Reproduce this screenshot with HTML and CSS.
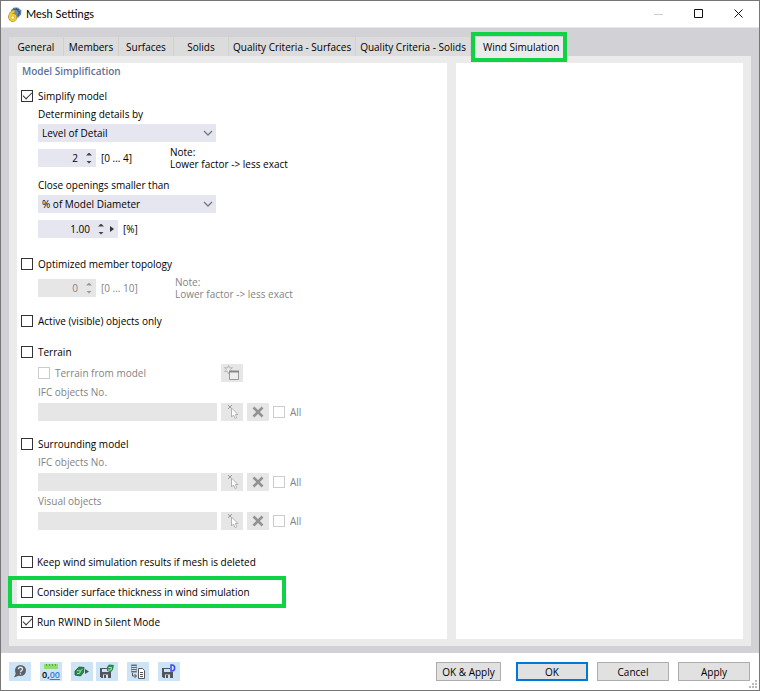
FILE: index.html
```html
<!DOCTYPE html>
<html lang="en">
  <head>
    <meta charset="UTF-8" />
    <title>Mesh Settings</title>
    <link rel="stylesheet" href="styles.css">
  </head>

  <body>
    <!-- shared icons -->
    <svg class="defs">
      <symbol id="i-chevron" viewBox="0 0 10 6">
        <path d="M1 1l4 4 4-4" fill="none" stroke="#77777c" stroke-width="1.3" />
      </symbol>
      <symbol id="i-pick" viewBox="0 0 22 18">
        <path d="M7 2l4 4M11 2l-4 4" stroke="#999" fill="none" />
        <path d="M10.500 5v9l2-2 1.500 3.500 1.800-.8-1.500-3.200h2.700z" fill="#fff" stroke="#aaa" stroke-width=".9" />
      </symbol>
      <symbol id="i-clear" viewBox="0 0 22 18">
        <path d="M6.500 4.500l9 9M15.500 4.500l-9 9" stroke="#929292" stroke-width="2.600" fill="none" />
      </symbol>
    </svg>

    <div class="window">
      <header class="titlebar">
        <svg class="logo" width="14" height="15" viewBox="0 0 14 15">
          <path d="M3 3l3-2.500 4 0 3.500 3-.5 4-3 3.500-3-2-3-2z" fill="#6c89b3" />
          <path d="M5 2l6 1M8 1l4 6M10 9l2-5" stroke="#34527c" fill="none" />
          <path d="M6.500 4C3.500 5 1.800 7.500 1.800 10.500" stroke="#a08a3a" stroke-width="3" fill="none" />
          <circle cx="4.700" cy="10.500" r="3" fill="#fff3b0" stroke="#a08a3a" stroke-width="2.800" />
          <path d="M6.500 4.200C3.500 5 1.800 7.500 1.800 10.500" stroke="#f1ce2f" stroke-width="2" fill="none" />
          <circle cx="4.700" cy="10.500" r="2.800" fill="none" stroke="#f1ce2f" stroke-width="1.900" />
        </svg>
        <h1>Mesh Settings</h1>
        <button class="win-btn" aria-label="Minimize" disabled>
          <svg width="10" height="10"><path d="M0 5.500h9" stroke="#ccc" /></svg>
        </button>
        <button class="win-btn" aria-label="Maximize">
          <svg width="10" height="10"><path d="M.5.5h8v8h-8z" fill="none" stroke="#111" /></svg>
        </button>
        <button class="win-btn" aria-label="Close">
          <svg width="10" height="10"><path d="M.5.5l8 8M8.500.5l-8 8" stroke="#111" /></svg>
        </button>
      </header>

      <main class="content">
        <div class="tabs" role="tablist">
          <button class="tab" role="tab">General</button>
          <button class="tab" role="tab">Members</button>
          <button class="tab" role="tab">Surfaces</button>
          <button class="tab" role="tab">Solids</button>
          <button class="tab" role="tab">Quality Criteria - Surfaces</button>
          <button class="tab" role="tab">Quality Criteria - Solids</button>
          <button class="tab active marked" role="tab" aria-selected="true">Wind Simulation</button>
        </div>

        <div class="page">
          <section class="panel options">
            <h2>Model Simplification</h2>

            <div class="group first">
              <label class="check"><input type="checkbox" checked>Simplify model</label>
              <div class="sub">
                <label class="caption" for="details">Determining details by</label>
                <div class="select">
                  <select id="details"><option>Level of Detail</option></select>
                  <svg width="10" height="6"><use href="#i-chevron" /></svg>
                </div>
                <div class="line">
                  <div class="spin">
                    <input type="text" value="2" aria-label="Level of detail">
                    <span class="arrows"><button class="up" aria-label="Increase"></button><button class="down" aria-label="Decrease"></button></span>
                  </div>
                  <span class="range">[0 ... 4]</span>
                  <p class="note">Note:<br>Lower factor -&gt; less exact</p>
                </div>
                <label class="caption spaced" for="openings">Close openings smaller than</label>
                <div class="select">
                  <select id="openings"><option>% of Model Diameter</option></select>
                  <svg width="10" height="6"><use href="#i-chevron" /></svg>
                </div>
                <div class="line">
                  <div class="spin wide">
                    <input type="text" value="1.00" aria-label="Opening size">
                    <span class="arrows"><button class="up" aria-label="Increase"></button><button class="down" aria-label="Decrease"></button></span>
                    <button class="more" aria-label="More"></button>
                  </div>
                  <span class="range">[%]</span>
                </div>
              </div>
            </div>

            <div class="group far">
              <label class="check"><input type="checkbox">Optimized member topology</label>
              <div class="sub disabled">
                <div class="line">
                  <div class="spin">
                    <input type="text" value="0" aria-label="Topology factor" disabled>
                    <span class="arrows"><button class="up" aria-label="Increase" disabled></button><button class="down" aria-label="Decrease" disabled></button></span>
                  </div>
                  <span class="range">[0 ... 10]</span>
                  <p class="note">Note:<br>Lower factor -&gt; less exact</p>
                </div>
              </div>
            </div>

            <div class="group">
              <label class="check"><input type="checkbox">Active (visible) objects only</label>
            </div>

            <div class="group tight">
              <label class="check"><input type="checkbox">Terrain</label>
              <div class="sub disabled">
                <div class="pick">
                  <label class="check"><input type="checkbox" disabled>Terrain from model</label>
                  <button class="tool" aria-label="New terrain" disabled>
                    <svg width="22" height="18" viewBox="0 0 22 18">
                      <path d="M7.500 1.500l1 2.600 3-.5-2 2 2 2-3-.3-1 2.700-1-2.700-3 .3 2-2-2-2 3 .5z" fill="#eee" stroke="#aaa" stroke-width=".8" />
                      <path d="M8.500 7.500h9v8h-9z" fill="#eee" stroke="#999" />
                      <path d="M8 7.500h10" stroke="#888" stroke-width="2" />
                    </svg>
                  </button>
                </div>
                <label class="caption" for="terrain-ifc">IFC objects No.</label>
                <div class="pick">
                  <input class="field" id="terrain-ifc" type="text" disabled>
                  <button class="tool" aria-label="Select" disabled><svg width="22" height="18"><use href="#i-pick" /></svg></button>
                  <button class="tool" aria-label="Clear" disabled><svg width="22" height="18"><use href="#i-clear" /></svg></button>
                  <label class="check"><input type="checkbox" disabled>All</label>
                </div>
              </div>
            </div>

            <div class="group tight">
              <label class="check"><input type="checkbox">Surrounding model</label>
              <div class="sub disabled">
                <label class="caption" for="model-ifc">IFC objects No.</label>
                <div class="pick">
                  <input class="field" id="model-ifc" type="text" disabled>
                  <button class="tool" aria-label="Select" disabled><svg width="22" height="18"><use href="#i-pick" /></svg></button>
                  <button class="tool" aria-label="Clear" disabled><svg width="22" height="18"><use href="#i-clear" /></svg></button>
                  <label class="check"><input type="checkbox" disabled>All</label>
                </div>
                <label class="caption" for="model-visual">Visual objects</label>
                <div class="pick">
                  <input class="field" id="model-visual" type="text" disabled>
                  <button class="tool" aria-label="Select" disabled><svg width="22" height="18"><use href="#i-pick" /></svg></button>
                  <button class="tool" aria-label="Clear" disabled><svg width="22" height="18"><use href="#i-clear" /></svg></button>
                  <label class="check"><input type="checkbox" disabled>All</label>
                </div>
              </div>
            </div>

            <div class="group last">
              <label class="check"><input type="checkbox">Keep wind simulation results if mesh is deleted</label>
              <label class="check marked"><input type="checkbox">Consider surface thickness in wind simulation</label>
              <label class="check"><input type="checkbox" checked>Run RWIND in Silent Mode</label>
            </div>
          </section>

          <section class="panel preview"></section>
        </div>
      </main>

      <footer class="footer">
        <button class="icon-btn" aria-label="Help">
          <svg width="22" height="19" viewBox="0 0 22 19">
            <circle cx="11.500" cy="8.500" r="5.500" fill="#5d6166" />
            <path d="M7 11l-2 4.500 5-2z" fill="#5d6166" />
            <path d="M9.500 7.200c0-2.600 4-2.600 4 0 0 1.500-2 1.400-2 3M11.500 11.200v1.300" fill="none" stroke="#d5e6f5" stroke-width="1.400" />
          </svg>
        </button>
        <button class="icon-btn units" aria-label="Units and decimal places">
          <svg width="14" height="5"><path d="M0 0h14v5H0z" fill="#8fdc70" /><path d="M2.500 0v2M5.500 0v2M8.500 0v2M11.500 0v2" stroke="#58a840" /></svg>
          <span>0,<u>00</u></span>
        </button>
        <button class="icon-btn" aria-label="Load defaults">
          <svg width="22" height="19" viewBox="0 0 22 19">
            <path d="M4 9l4-4 5 .5-.5 5-3 3.500-5.500-1z" fill="#2b8a4b" stroke="#17572d" stroke-width=".8" />
            <path d="M6 8.500l3.500.5 2-2M6 11.500h2.500l1-2.500" fill="none" stroke="#a9d9b6" />
            <path d="M14 7l4 2.500-4 2.500z" fill="#4e565a" />
          </svg>
        </button>
        <button class="icon-btn" aria-label="Save as default">
          <svg width="22" height="19" viewBox="0 0 22 19">
            <path d="M4 6h11v10H5.500L4 14.500z" fill="#50565b" />
            <path d="M6 7h7v3H6zM7 12.500h5V16H7z" fill="#cde4f7" />
            <path d="M8 13h2v3H8z" fill="#50565b" />
            <path d="M11 5l2-2.500 5 .5-1 4.500-2 2.500-4-1z" fill="#2b8a4b" />
            <path d="M12.500 5.500h3l-.5 2.500h-3" fill="none" stroke="#b7e6c3" />
          </svg>
        </button>
        <button class="icon-btn" aria-label="Copy to report">
          <svg width="22" height="19" viewBox="0 0 22 19">
            <path d="M4 3.500h6M4 5.500h6M4 7.500h6M4 9.500h6" stroke="#62676b" />
            <path d="M4.500 2.500h5v8h-5z" fill="none" stroke="#8b9195" stroke-width=".7" />
            <path d="M5.500 11v3h4M7.500 12l2 2-2 2" fill="none" stroke="#555" />
            <path d="M11.500 6.500h4l2 2v8h-6z" fill="#fff" stroke="#555" />
            <path d="M13 10.500h3M13 12.500h3M13 14.500h3" stroke="#555" />
          </svg>
        </button>
        <button class="icon-btn" aria-label="Save default">
          <svg width="22" height="19" viewBox="0 0 22 19">
            <path d="M4 6h11v10H5.500L4 14.500z" fill="#50565b" />
            <path d="M6 7h7v3H6zM7 12.500h5V16H7z" fill="#cde4f7" />
            <path d="M8 13h2v3H8z" fill="#50565b" />
            <path d="M12 2h5v8h-5z" fill="#cde4f7" />
            <path d="M13 3v6h1c3.500 0 3.500-6 0-6z" fill="none" stroke="#4343f0" stroke-width="1.500" />
          </svg>
        </button>
        <div class="actions">
          <button class="btn compact">OK &amp; Apply</button>
          <button class="btn primary">OK</button>
          <button class="btn">Cancel</button>
          <button class="btn">Apply</button>
        </div>
        <svg class="grip" width="8" height="8"><path d="M6 0h2v2H6zM3 3h2v2H3zM6 3h2v2H6zM0 6h2v2H0zM3 6h2v2H3zM6 6h2v2H6z" fill="#bbb" /></svg>
      </footer>
    </div>
  </body>
</html>
```
FILE: styles.css
```css
* {
  box-sizing: border-box;
  margin: 0;
  padding: 0;
}

body,
button,
input,
select {
  font: 10px/16px "Open Sans", "Noto Sans", sans-serif;
  color: #000;
}

button,
input,
select {
  border: none;
  border-radius: 0;
  background: none;
}

svg {
  display: block;
}

.defs {
  position: absolute;
  width: 0;
  height: 0;
}

.window {
  display: flex;
  flex-direction: column;
  min-height: 100vh;
  border: 1px solid #777;
  background: #fff;
}

/* title bar */
.titlebar {
  display: flex;
  align-items: center;
  height: 27px;
  padding-left: 7px;
  border-bottom: 1px solid #e8e8ea;
}

.titlebar h1 {
  flex: 1;
  margin-left: 4px;
  font-family: Lato, "Open Sans", sans-serif;
  font-size: 11px;
  font-weight: normal;
}

.win-btn {
  display: flex;
  align-items: center;
  justify-content: center;
  width: 40px;
  height: 26px;
}

/* tabs */
.content {
  flex: 1;
  display: flex;
  flex-direction: column;
  padding: 9px 8px 7px;
  background: #d1d1d6;
}

.tabs {
  display: flex;
}

.tab {
  min-width: 55px;
  height: 19px;
  padding: 0 4px;
  border-right: 1px solid #d0d0d0;
  background: #dcdcdc;
  white-space: nowrap;
}

.tab.active {
  padding: 0 8px 0 12px;
  border: none;
  background: #ebebeb;
}

.marked {
  position: relative;
}

.marked::after {
  content: "";
  position: absolute;
  border: 4px solid #10d245;
  pointer-events: none;
}

.tab.marked::after {
  inset: -5px 0 -6px;
}

.page {
  flex: 1;
  display: grid;
  grid-template-columns: 3fr 2fr;
  gap: 9px;
  padding: 7px 8px;
  background: #ebebeb;
}

.panel {
  background: #fff;
}

.options {
  padding: 0 4px 8px;
}

/* option groups */
.options h2 {
  padding-left: 1px;
  font-size: 10px;
  font-weight: 600;
  color: #5f7199;
}

.group {
  margin-top: 16px;
}

.group.first {
  margin-top: 9px;
}

.group.far {
  margin-top: 18px;
}

.group.tight {
  margin-top: 15px;
}

.group.first .caption {
  margin: 2px 0;
}

.group.first .caption.spaced {
  margin-top: 10px;
}

.group.last {
  display: flex;
  flex-direction: column;
  align-items: flex-start;
  gap: 14px;
  margin-top: 24px;
}

.sub {
  margin-left: 17px;
}

.check {
  display: flex;
  align-items: center;
  gap: 5px;
  width: fit-content;
}

.check input {
  display: grid;
  place-items: center;
  appearance: none;
  width: 12px;
  height: 12px;
  border: 1px solid #333;
  background: #fff;
}

.check input:checked::before {
  content: "";
  width: 8px;
  height: 4px;
  margin-bottom: 3px;
  border: solid #333;
  border-width: 0 0 1px 1px;
  rotate: -45deg;
}

.check.marked::after {
  inset: -8px auto -8px -13px;
  width: 270px;
}

.group.last .check {
  gap: 4px;
}

.caption {
  display: block;
  margin-top: 2px;
}

.select {
  position: relative;
  width: 178px;
}

.select select {
  display: block;
  appearance: none;
  width: 100%;
  height: 18px;
  padding: 0 4px;
  background: #e6e6f1;
}

.select svg {
  position: absolute;
  top: 6px;
  right: 3px;
  pointer-events: none;
}

.line {
  display: flex;
  align-items: center;
  margin-top: 7px;
  height: 18px;
}

.spin {
  display: flex;
  align-items: center;
  width: 58px;
  height: 18px;
  padding-right: 4px;
  background: #e6e6f1;
}

.spin.wide {
  width: 80px;
}

.spin input {
  flex: 1;
  min-width: 0;
  text-align: right;
}

.arrows {
  display: flex;
  flex-direction: column;
  gap: 5px;
  margin-left: 8px;
}

.up,
.down {
  width: 6px;
  height: 3px;
  background: #444;
  clip-path: polygon(50% 0, 100% 100%, 0 100%);
}

.down {
  clip-path: polygon(0 0, 100% 0, 50% 100%);
}

.more {
  width: 4px;
  height: 6px;
  margin-left: 6px;
  background: #333;
  clip-path: polygon(0 0, 100% 50%, 0 100%);
}

.range {
  width: 69px;
  margin-left: 5px;
}

.note {
  line-height: 12px;
}

.disabled .range {
  width: 74px;
}

.disabled,
.disabled input {
  color: #838383;
}

.disabled .spin,
.field,
.tool {
  background: #e6e6e6;
}

.disabled .check input {
  border-color: #ccc;
}

.disabled .up,
.disabled .down {
  background: #999;
}

.pick {
  display: flex;
  align-items: center;
  gap: 4px;
  margin-top: 3px;
}

.tight .pick:has(.check:first-child) {
  justify-content: space-between;
  width: 205px;
  margin-top: 4px;
}

.field {
  width: 179px;
  height: 18px;
}

.tool {
  height: 18px;
}

/* footer */
.footer {
  position: relative;
  display: flex;
  align-items: center;
  height: 37px;
  padding: 0 9px 0 8px;
}

.icon-btn {
  width: 22px;
  height: 19px;
  margin-right: 9px;
  background: #cde4f7;
}

.icon-btn:nth-child(3) {
  margin-right: 3px;
}

.units {
  display: flex;
  flex-direction: column;
  align-items: center;
  padding-top: 2px;
  font-size: 9px;
  font-weight: 600;
  line-height: 11px;
}

.units u {
  color: #3c78e0;
}

.actions {
  display: flex;
  gap: 9px;
  margin-left: auto;
}

.btn {
  width: 72px;
  height: 19px;
  border: 1px solid #adadad;
  background: #e1e1e1;
}

.btn.compact {
  width: 65px;
  margin-right: 6px;
}

.btn.primary {
  border: 2px solid #0078d7;
  line-height: 14px;
}

.grip {
  position: absolute;
  right: 2px;
  bottom: 2px;
}
```
